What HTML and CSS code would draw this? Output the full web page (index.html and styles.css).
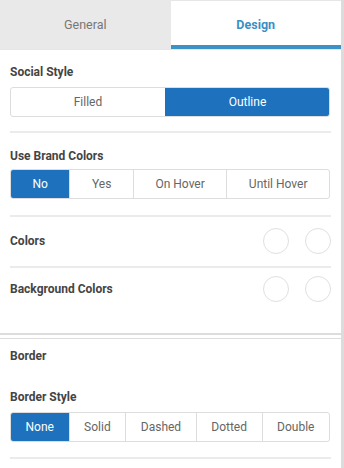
FILE: index.html
```html
<!DOCTYPE html>
<html>
<head>
<meta charset="utf-8">
<link rel="stylesheet" href="styles.css">
</head>
<body>
<div class="app">
  <div class="panel">
    <div class="tabs">
      <div class="tab">General</div>
      <div class="tab active">Design</div>
    </div>
    <div class="card">
      <div class="section s1">
        <div class="label">Social Style</div>
        <div class="group">
          <div class="seg">Filled</div>
          <div class="seg on">Outline</div>
        </div>
      </div>
      <div class="section s2">
        <div class="label">Use Brand Colors</div>
        <div class="group">
          <div class="seg on">No</div>
          <div class="seg">Yes</div>
          <div class="seg">On Hover</div>
          <div class="seg">Until Hover</div>
        </div>
      </div>
      <div class="section row s3">
        <div class="label">Colors</div>
        <div class="swatches"><span class="swatch"></span><span class="swatch"></span></div>
      </div>
      <div class="section row s4">
        <div class="label">Background Colors</div>
        <div class="swatches"><span class="swatch"></span><span class="swatch"></span></div>
      </div>
    </div>
    <div class="card card2">
      <div class="section s5">
        <div class="label">Border</div>
      </div>
      <div class="section s6">
        <div class="label">Border Style</div>
        <div class="group">
          <div class="seg on">None</div>
          <div class="seg">Solid</div>
          <div class="seg">Dashed</div>
          <div class="seg">Dotted</div>
          <div class="seg">Double</div>
        </div>
      </div>
    </div>
  </div>
  <div class="scrollbar"></div>
</div>
</body>
</html>
```

FILE: styles.css
```css
html, body {
  margin: 0;
  padding: 0;
  background: #ffffff;
  font-family: Roboto, "Liberation Sans", Arial, sans-serif;
  overflow: hidden;
}
.app {
  display: flex;
  width: 344px;
  height: 468px;
}
.panel {
  width: 341px;
  flex: none;
  display: flex;
  flex-direction: column;
}
.scrollbar {
  flex: 1;
  background: #dcdcdc;
}
.tabs {
  display: flex;
  height: 50px;
  border-bottom: 1px solid #e6e6e6;
  box-sizing: border-box;
}
.tab {
  flex: 1;
  display: flex;
  align-items: center;
  justify-content: center;
  font-size: 12.5px;
  color: #777777;
  background: #e9e9e9;
  box-sizing: border-box;
}
.tab.active {
  background: #ffffff;
  color: #3a8fc7;
  font-weight: 700;
  border-top: 1px solid #e6e6e6;
  border-bottom: 4px solid #3d91c6;
  padding-top: 3px;
}
.card {
  padding: 0 10px;
  border-bottom: 2px solid #dddddd;
}
.card2 {
  margin-top: 3px;
  border-top: 1px solid #dddddd;
  border-bottom: none;
}
.section {
  border-bottom: 2px solid #ebebeb;
}
.label {
  font-size: 12px;
  line-height: 16px;
  font-weight: 700;
  color: #444444;
}
.s1 { padding: 14px 0 14px; }
.s2 { padding: 15px 0 16px; }
.s3 { padding: 11px 0 12px; }
.s4 { padding: 8px 0 31px; border-bottom: none; }
.s5 { padding: 9px 0 0; border-bottom: none; }
.s6 { padding: 25px 0 15px; }
.s1 .label, .s6 .label { margin-bottom: 7px; }
.s2 .label { margin-bottom: 5px; }
.group {
  display: flex;
  width: 320px;
  height: 30px;
  border: 1px solid #dddddd;
  border-radius: 3px;
  box-sizing: border-box;
  overflow: hidden;
}
.seg {
  flex: 1 1 auto;
  display: flex;
  align-items: center;
  justify-content: center;
  font-size: 12px;
  color: #666666;
  border-left: 1px solid #dddddd;
}
.seg:first-child {
  border-left: none;
}
.seg.on {
  background: #1e72bd;
  color: #ffffff;
  border-left-color: #1e72bd;
}
.row {
  display: flex;
  align-items: center;
  justify-content: space-between;
}
.swatches {
  display: flex;
  gap: 16px;
}
.swatch {
  width: 26px;
  height: 26px;
  border-radius: 50%;
  border: 1px solid #e0e0e0;
  box-sizing: border-box;
}
```
